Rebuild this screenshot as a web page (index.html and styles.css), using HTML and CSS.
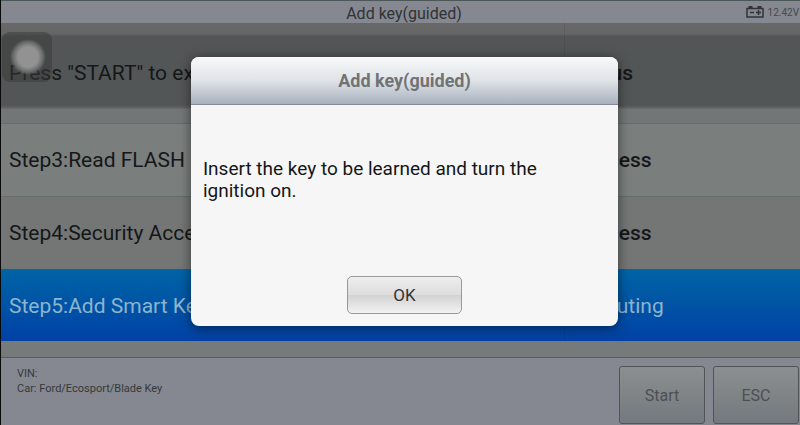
FILE: index.html
```html
<!DOCTYPE html>
<html lang="en">
<head>
    <meta charset="UTF-8">
    <meta name="viewport" content="width=device-width, initial-scale=1.0">
    <title>Add key(guided)</title>
    <link rel="stylesheet" href="styles.css">
</head>
<body>
    <div class="screen">
        <header class="top-bar">
            <h1>Add key(guided)</h1>
            <div class="battery">
                <svg width="18" height="12" viewBox="0 0 18 12" fill="none" stroke="#303436">
                    <path d="M1 2.5h16v8.5H1z" stroke-width="1.5"/>
                    <path d="M2.5 1h4M11.5 1h4" stroke-width="2"/>
                    <path d="M4 6.5h4M10 6.5h5M12.5 4v5" stroke-width="1.5"/>
                </svg>
                <span>12.42V</span>
            </div>
        </header>
        <table class="steps">
            <thead>
                <tr>
                    <th>Press "START" to execute</th>
                    <th>Status</th>
                </tr>
            </thead>
            <tbody>
                <tr>
                    <td>Step3:Read FLASH</td>
                    <td>Success</td>
                </tr>
                <tr class="even">
                    <td>Step4:Security Access</td>
                    <td>Success</td>
                </tr>
                <tr class="active">
                    <td>Step5:Add Smart Key</td>
                    <td>Executing</td>
                </tr>
            </tbody>
        </table>
        <footer class="bottom-bar">
            <div class="car-info">
                <p>VIN:</p>
                <p>Car: Ford/Ecosport/Blade Key</p>
            </div>
            <button type="button" class="bar-btn">Start</button>
            <button type="button" class="bar-btn">ESC</button>
        </footer>
    </div>

    <!-- floating touch button -->
    <button type="button" class="touch-btn" aria-label="Touch menu"></button>

    <div class="mask">
        <div class="dialog" role="dialog" aria-labelledby="dialog-title">
            <h2 id="dialog-title">Add key(guided)</h2>
            <p class="message">Insert the key to be learned and turn the ignition on.</p>
            <button type="button" class="ok-btn">OK</button>
        </div>
    </div>
</body>
</html>
```
FILE: styles.css
```css
* {
    margin: 0;
    padding: 0;
    box-sizing: border-box;
}
body {
    font-family: Roboto, sans-serif;
    color: #151718;
    background: #767a7a;
}
button {
    font-family: inherit;
}
.screen {
    display: flex;
    flex-direction: column;
    min-height: 100vh;
    border-left: 1px solid #080a0a;
}
.top-bar {
    display: grid;
    grid-template-columns: 1fr auto 1fr;
    align-items: center;
    padding: 2px 1px 2px 8px;
    border-top: 1px solid #4c5758;
    background: #858890;
}
.top-bar h1 {
    grid-column: 2;
    font-size: 16px;
    font-weight: 400;
    line-height: 18px;
    padding-top: 2px;
    height: 18px;
    color: #303336;
}
.battery {
    display: flex;
    justify-content: flex-end;
    align-items: center;
    gap: 4px;
    font-size: 10px;
    color: #44484c;
}
.steps {
    width: 100%;
    table-layout: fixed;
    border-collapse: collapse;
    font-size: 21px;
    line-height: 24px;
    text-align: left;
}
.steps th,
.steps td {
    padding: 24px 8px;
    font-weight: 400;
    white-space: nowrap;
    border-top: 1px solid #686c6c;
}
.steps th:last-child,
.steps td:last-child {
    width: 236px;
    font-weight: 500;
    border-left: 1px solid rgba(0,0,0,0.08);
}
.steps th {
    padding: 38px 8px;
    border-top: none;
}
.steps thead tr {
    background: linear-gradient(#686868 0, #656666 11px, #535656 13px, #535656 82px, #616364 85px, #727676 86px, #727676 100%);
}
.steps tbody tr {
    background: #7a7e7d;
}
.steps tbody .even {
    background: #737675;
}
.steps tbody .active {
    color: #8bb5cc;
    background: linear-gradient(#0064a6, #0041a5);
}
.steps .active td {
    padding: 24px 8px 23px;
    border-top-color: #0864a0;
}
.steps .active td:last-child {
    font-weight: 400;
}
.bottom-bar {
    flex: 1;
    display: flex;
    align-items: flex-start;
    gap: 8px;
    margin-top: 16px;
    padding: 8px 1px 0 16px;
    border-top: 1px solid #585c5f;
    background: #858890;
}
.car-info {
    flex: 1;
    font-size: 11px;
    line-height: 15px;
    color: #34383b;
}
.bar-btn {
    width: 86px;
    height: 58px;
    border: 1px solid #505456;
    border-radius: 3px;
    background: linear-gradient(#8b8f8f, #74797e);
    color: #4c5053;
    font-size: 16px;
}
.touch-btn {
    position: absolute;
    top: 32px;
    left: 2px;
    width: 50px;
    height: 50px;
    border: none;
    border-radius: 8px;
    background: radial-gradient(circle at 26px 25px, #929292 10px, #828383 12px, #686a6a 15px, rgba(55,57,57,0.5) 18px);
}
.mask {
    position: absolute;
    top: 0;
    left: 0;
    width: 100%;
    padding: 57px 0 0 9px;
}
.dialog {
    width: 54%;
    margin: 0 auto;
    padding-bottom: 12px;
    border-radius: 8px;
    background: #f6f6f6;
    box-shadow: 0 2px 12px rgba(0,0,0,0.5);
    overflow: hidden;
}
.dialog h2 {
    padding: 12px 0;
    border-bottom: 1px solid #858b94;
    background: linear-gradient(#f8f9fa, #dfe3e7 50%, #a8b1be);
    color: #717375;
    font-size: 18px;
    line-height: 23px;
    text-align: center;
}
.message {
    padding: 53px 48px 0 12px;
    font-size: 19px;
    line-height: 22px;
}
.ok-btn {
    display: block;
    width: 115px;
    height: 38px;
    margin: 74px auto 0;
    border: 1px solid #999;
    border-radius: 5px;
    background: linear-gradient(#eee, #ddd 49%, #d2d2d2 50%, #f2f2f2);
    color: #333;
    font-size: 17px;
}
```
